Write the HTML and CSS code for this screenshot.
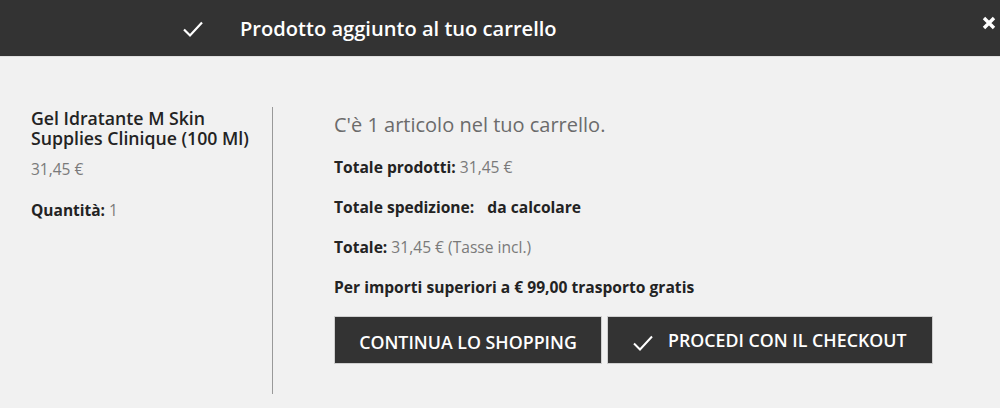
FILE: index.html
```html
<!DOCTYPE html>
<html lang="it">
<head>
<meta charset="utf-8">
<link rel="stylesheet" href="styles.css">
</head>
<body>
<div class="modal">
  <header class="modal-header">
    <svg class="hdr-check" width="22" height="18" viewBox="0 0 22 18"><path d="M2 9.5 L8 15.5 L20 2.5" fill="none" stroke="#fff" stroke-width="2.2"/></svg>
    <h4 class="modal-title">Prodotto aggiunto al tuo carrello</h4>
    <svg class="close" width="14" height="14" viewBox="0 0 14 14"><path d="M2 2 L12 12 M12 2 L2 12" stroke="#fff" stroke-width="3.4"/></svg>
  </header>
  <div class="modal-body">
    <div class="product">
      <h6 class="product-name">Gel Idratante M Skin Supplies Clinique (100 Ml)</h6>
      <p class="price">31,45 €</p>
      <p class="qty"><strong>Quantità:</strong> 1</p>
    </div>
    <div class="cart">
      <p class="cart-count">C'è 1 articolo nel tuo carrello.</p>
      <p class="line"><strong>Totale prodotti:</strong> 31,45 €</p>
      <p class="line"><strong>Totale spedizione:</strong>&nbsp;<strong class="ship">da calcolare</strong></p>
      <p class="line"><strong>Totale:</strong> 31,45 € (Tasse incl.)</p>
      <p class="line"><strong>Per importi superiori a € 99,00 trasporto gratis</strong></p>
      <div class="actions">
        <button class="btn btn-continue">CONTINUA LO SHOPPING</button>
        <button class="btn btn-checkout"><svg width="22" height="18" viewBox="0 0 22 18"><path d="M2 9.5 L8 15.5 L20 2.5" fill="none" stroke="#fff" stroke-width="2"/></svg>PROCEDI CON IL CHECKOUT</button>
      </div>
    </div>
  </div>
</div>
</body>
</html>
```
FILE: styles.css
```css
* { box-sizing: border-box; }
html, body { margin: 0; padding: 0; }
body {
  background: #f1f1f1;
  font-family: "Open Sans", "DejaVu Sans", sans-serif;
  color: #232323;
  width: 1000px;
  height: 408px;
  overflow: hidden;
}
.modal-header {
  background: #333333;
  height: 57px;
  display: flex;
  align-items: center;
  position: relative;
  border-bottom: 1px solid #e0e0e0;
}
.hdr-check { margin-left: 182px; margin-right: 36px; margin-top: 2px; }
.modal-title {
  margin: 0;
  color: #fff;
  font-size: 20.1px;
  font-weight: 600;
}
.close { position: absolute; right: 4px; top: 16px; }
.modal-body {
  display: flex;
  padding-top: 50px;
}
.product {
  width: 242px;
  margin-left: 31px;
  border-right: 1px solid #999;
  height: 287px;
  padding-top: 1px;
}
.product-name {
  margin: 0;
  font-size: 17.7px;
  font-weight: 600;
  line-height: 20px;
  color: #232323;
  padding-right: 6px;
}
.price { margin: 11px 0 0; font-size: 15.5px; color: #7a7a7a; line-height: 20px; }
.qty { margin: 21px 0 0; font-size: 15.5px; color: #7a7a7a; line-height: 20px; }
.qty strong, .line strong { color: #232323; font-weight: 700; }
.cart { margin-left: 61px; padding-top: 3px; }
.cart-count { margin: 0; font-size: 20px; color: #6b6b6b; line-height: 30px; }
.line { margin: 17px 0 0; font-size: 15.6px; color: #7a7a7a; line-height: 20px; }
.line + .line { margin-top: 20px; }
.ship { margin-left: 9px; }
.actions { display: flex; gap: 5px; margin-top: 19px; }
.btn {
  background: #333;
  color: #fff;
  border: 1px solid #cfcfcf;
  font-family: "Open Sans", sans-serif;
  font-weight: 600;
  font-size: 17.8px;
  height: 48px;
  padding: 0;
  display: flex;
  align-items: center;
}
.btn-continue { width: 268px; justify-content: center; padding-top: 3px; }
.btn-checkout { width: 326px; padding-left: 24px; }
.btn-checkout svg { margin-right: 14px; margin-top: 5px; }
```
